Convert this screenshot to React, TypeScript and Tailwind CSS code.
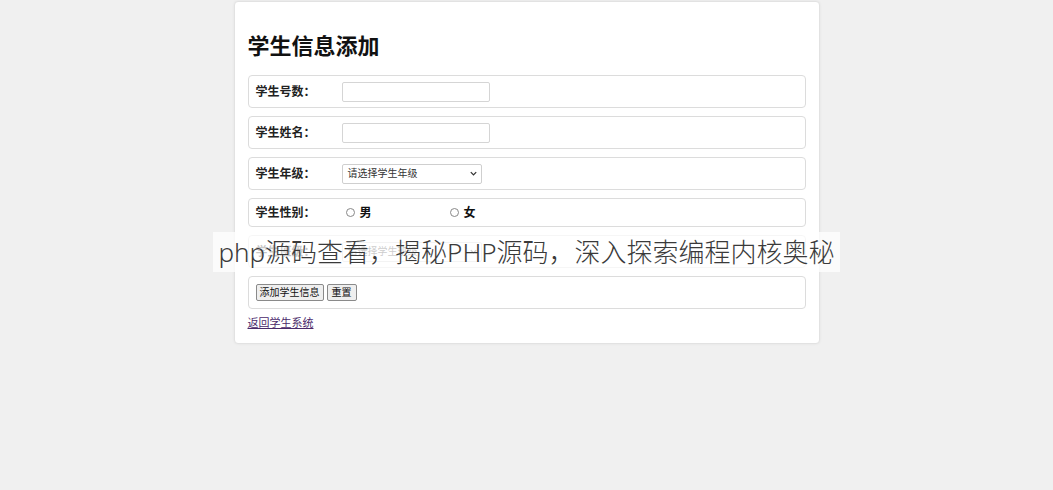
import React from "react";

const font = { fontFamily: '"Liberation Sans", "Noto Sans CJK SC", sans-serif' };

function Row({ children, h = "h-[33px]" }: { children: React.ReactNode; h?: string }) {
  return (
    <div className={`${h} flex items-center rounded-[4px] border border-[#dcdcdc] bg-white px-[7px]`}>
      {children}
    </div>
  );
}

function Label({ text }: { text: string }) {
  return <span className="w-[86px] shrink-0 text-[12px] font-bold text-[#222]">{text}</span>;
}

function Select({ text }: { text: string }) {
  return (
    <div className="flex h-[20px] w-[140px] items-center justify-between rounded-[2px] border border-[#cfcfcf] bg-white pl-[5px] pr-[3px] text-[10px] text-[#333]">
      <span>{text}</span>
      <svg width="9" height="9" viewBox="0 0 10 10"><path d="M2 3.5 L5 6.5 L8 3.5" fill="none" stroke="#333" strokeWidth="1.4" /></svg>
    </div>
  );
}

export default function App() {
  return (
    <div className="relative min-h-[490px] w-full bg-[#f0f0f0]" style={font}>
      <div className="flex justify-center pt-px">
        <div className="w-[586px] rounded-[4px] border border-[#e2e2e2] bg-white px-[13px] pb-[9px] pt-[30px] shadow-[0_0_3px_rgba(0,0,0,0.06)]">
          <h1 className="mb-[13px] text-[22px] font-bold leading-[30px] text-[#111]">学生信息添加</h1>
          <div className="flex flex-col gap-[8px]">
            <Row>
              <Label text="学生号数：" />
              <div className="h-[20px] w-[148px] rounded-[2px] border border-[#d5d5d5] bg-white" />
            </Row>
            <Row>
              <Label text="学生姓名：" />
              <div className="h-[20px] w-[148px] rounded-[2px] border border-[#d5d5d5] bg-white" />
            </Row>
            <Row>
              <Label text="学生年级：" />
              <Select text="请选择学生年级" />
            </Row>
            <Row h="h-[29px]">
              <Label text="学生性别：" />
              <div className="flex items-center">
                <span className="ml-[4px] mr-[5px] h-[9px] w-[9px] rounded-full border border-[#888] bg-white" />
                <span className="w-[90px] text-[12px] font-bold text-[#111]">男</span>
                <span className="mr-[5px] h-[9px] w-[9px] rounded-full border border-[#888] bg-white" />
                <span className="text-[12px] font-bold text-[#111]">女</span>
              </div>
            </Row>
            <Row>
              <Label text="学生班级：" />
              <Select text="请选择学生班级" />
            </Row>
            <Row>
              <div className="flex gap-[3px]">
                <button className="h-[17px] rounded-[2px] border border-[#8a8a8a] bg-[#efefef] px-[3px] text-[10px] leading-[15px] text-[#111]">添加学生信息</button>
                <button className="h-[17px] rounded-[2px] border border-[#8a8a8a] bg-[#efefef] px-[4px] text-[10px] leading-[15px] text-[#111]">重置</button>
              </div>
            </Row>
          </div>
          <a href="#" className="mt-[7px] inline-block text-[11px] leading-[15px] text-[#4b2a6b] underline">返回学生系统</a>
        </div>
      </div>
      <div className="absolute left-[213px] top-[232px] flex h-[40px] w-[627px] items-center justify-center bg-white/75">
        <span
          className="whitespace-nowrap text-[26px] text-[#3a3a3a]"
          style={{ fontFamily: '"Noto Sans", "Noto Sans CJK SC", sans-serif', fontWeight: 300 }}
        >
          php源码查看，揭秘PHP源码，深入探索编程内核奥秘
        </span>
      </div>
    </div>
  );
}
